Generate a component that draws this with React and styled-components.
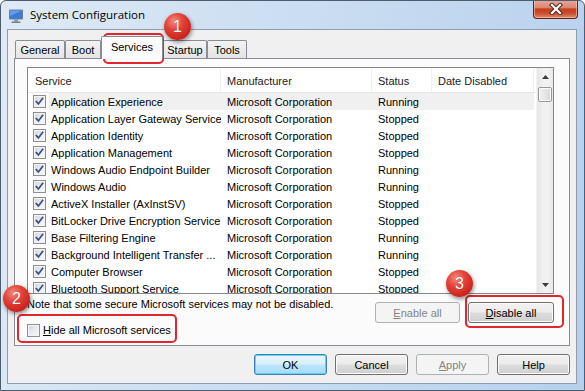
import React from 'react';
import styled, { createGlobalStyle, css } from 'styled-components';

const Global = createGlobalStyle`
  html, body { margin: 0; padding: 0; background: #ffffff; }
  body { font-family: "Liberation Sans", Arial, sans-serif; font-size: 11px; color: #000; }
  * { box-sizing: border-box; }
`;

const Window = styled.div`
  position: relative;
  width: 585px;
  height: 391px;
  border: 1px solid #4d5d70;
  border-radius: 6px 6px 0 0;
  background: linear-gradient(100deg, #dfeaf6 0%, #cfe0f2 35%, #c4d9f0 65%, #b6d0ed 100%);
  display: flex;
  flex-direction: column;
  overflow: hidden;
`;

const TitleBar = styled.div`
  height: 28px;
  flex: none;
  display: flex;
  align-items: flex-start;
  padding-left: 7px;
  padding-right: 6px;
`;

const AppIcon = styled.svg`
  width: 16px;
  height: 16px;
  margin-top: 7px;
  flex: none;
`;

const Title = styled.div`
  font-family: "Open Sans", "Noto Sans", sans-serif;
  font-size: 11.5px;
  line-height: 16px;
  margin: 6px 0 0 6px;
  color: #000;
`;

const CloseButton = styled.div`
  margin-left: auto;
  width: 45px;
  height: 19px;
  margin-top: -1px;
  border: 1px solid #5e2219;
  border-top: none;
  border-radius: 0 0 4px 4px;
  background: linear-gradient(#e9a898 0%, #dc8672 42%, #c5401f 50%, #c94a2d 72%, #e08a6a 100%);
  box-shadow: inset 0 0 0 1px rgba(255, 210, 195, 0.55);
  display: flex;
  align-items: center;
  justify-content: center;
`;

const Client = styled.div`
  flex: 1;
  margin: 0 7px 6px 6px;
  border: 1px solid #8d9db0;
  background: #f0f0f0;
  padding: 6px 6px 0 6px;
  display: flex;
  flex-direction: column;
`;

const TabStrip = styled.div`
  height: 22px;
  display: flex;
  align-items: flex-end;
  padding-left: 1px;
`;

const Tab = styled.div`
  width: ${p => p.$w}px;
  height: ${p => (p.$active ? 23 : 18)}px;
  margin-bottom: ${p => (p.$active ? -1 : 0)}px;
  border: 1px solid #898c95;
  border-bottom: none;
  border-radius: 2px 2px 0 0;
  display: flex;
  align-items: center;
  justify-content: center;
  padding-bottom: ${p => (p.$active ? 2 : 0)}px;
  position: relative;
  z-index: ${p => (p.$active ? 1 : 0)};
  background: ${p => (p.$active ? '#fbfbfb' : 'linear-gradient(#f3f3f3, #e4e4e4)')};
`;

const Panel = styled.div`
  height: 288px;
  border: 1px solid #898c95;
  background: #fbfbfb;
  padding: 8px 15px 0 12px;
  display: flex;
  flex-direction: column;
`;

const ListView = styled.div`
  height: 227px;
  border: 1px solid #828790;
  background: #ffffff;
  display: flex;
  overflow: hidden;
`;

const ListContent = styled.div`
  flex: 1;
  overflow: hidden;
`;

const HeaderRow = styled.div`
  height: 25px;
  display: grid;
  grid-template-columns: 193px 151px 60px 102px;
  border-bottom: 1px solid #e5e5e5;
`;

const HeaderCell = styled.div`
  display: flex;
  align-items: center;
  padding-left: ${p => p.$pad}px;
  padding-top: 1px;
  border-right: 1px solid #efefef;
  color: #1a1a1a;
`;

const Row = styled.div`
  height: 17px;
  display: flex;
  align-items: center;
`;

const CheckCell = styled.div`
  width: 21px;
  height: 17px;
  padding-left: 5px;
  display: flex;
  align-items: center;
`;

const RowBody = styled.div`
  height: 17px;
  display: grid;
  grid-template-columns: 172px 151px 60px 102px;
  align-items: center;
  background: ${p => (p.$hot ? '#f0f0f0' : 'transparent')};
`;

const Cell = styled.div`
  padding-left: ${p => p.$pad}px;
  padding-top: 1px;
  white-space: nowrap;
  overflow: hidden;
  line-height: 16px;
`;

const Box = styled.span`
  width: 13px;
  height: 13px;
  flex: none;
  border: 1px solid #8e8f8f;
  background: linear-gradient(135deg, #d3d6da 0%, #ebedef 55%, #f8f8f8 100%);
  box-shadow: inset 0 0 0 1px #f4f4f4;
  display: inline-flex;
  align-items: center;
  justify-content: center;
`;

const ScrollBar = styled.div`
  width: 17px;
  flex: none;
  background: linear-gradient(90deg, #e6e6e6, #f1f1f1 40%, #f1f1f1 70%, #e8e8e8);
  display: flex;
  flex-direction: column;
  border-left: 1px solid #f4f4f4;
`;

const ArrowButton = styled.div`
  height: 17px;
  display: flex;
  align-items: center;
  justify-content: center;
`;

const Thumb = styled.div`
  height: 15px;
  margin: 2px 1px 0 1px;
  border: 1px solid #979797;
  border-radius: 2px;
  background: linear-gradient(90deg, #f0f0f0, #e6e6e6 50%, #d8d8d8 100%);
  box-shadow: inset 0 0 0 1px #fafafa;
`;

const Track = styled.div`
  flex: 1;
`;

const BottomArea = styled.div`
  display: flex;
  justify-content: space-between;
  margin-top: 4px;
`;

const LeftCol = styled.div`
  display: flex;
  flex-direction: column;
`;

const Note = styled.div`
  line-height: 13px;
  color: #000;
`;

const CheckLabel = styled.label`
  margin-top: 13px;
  display: flex;
  align-items: center;
  gap: 3px;
  line-height: 13px;
`;

const Ul = styled.span`
  text-decoration: underline;
`;

const ButtonGroup = styled.div`
  display: flex;
  gap: 8px;
  margin-top: 4px;
`;

const Button = styled.div`
  width: ${p => p.$w}px;
  height: 21px;
  border-radius: 3px;
  display: flex;
  align-items: center;
  justify-content: center;
  border: 1px solid #707070;
  background: linear-gradient(#f2f2f2 0%, #ebebeb 48%, #dddddd 52%, #cfcfcf 100%);
  box-shadow: inset 0 0 0 1px #fbfbfb;
  color: #000;
  ${p => p.$default && css`
    border-color: #3c7fb1;
    background: linear-gradient(#eaf6fd 0%, #d9f0fc 48%, #bee6fd 52%, #a7d9f5 100%);
    box-shadow: inset 0 0 0 1px #5fd2fa;
  `}
  ${p => p.$disabled && css`
    border-color: #adb2b5;
    background: #f4f4f4;
    box-shadow: none;
    color: #838383;
  `}
`;

const DialogButtons = styled.div`
  display: flex;
  justify-content: flex-end;
  gap: 8px;
  margin-top: 8px;
`;

const Highlight = styled.div`
  position: absolute;
  left: ${p => p.$x}px;
  top: ${p => p.$y}px;
  width: ${p => p.$w}px;
  height: ${p => p.$h}px;
  border: 2px solid #e3262b;
  border-radius: 5px;
  pointer-events: none;
`;

const Marker = styled.div`
  position: absolute;
  left: ${p => p.$x}px;
  top: ${p => p.$y}px;
  width: 27px;
  height: 27px;
  border-radius: 50%;
  background: radial-gradient(circle at 38% 30%, #f58c80 0%, #e2433a 35%, #cc2520 70%, #a91510 100%);
  box-shadow: 1px 2px 4px rgba(0, 0, 0, 0.45);
  color: #ffffff;
  font-family: "Liberation Sans", Arial, sans-serif;
  font-size: 16px;
  display: flex;
  align-items: center;
  justify-content: center;
  text-shadow: 0 0 1px rgba(120, 0, 0, 0.6);
`;

const Check = () => (
  <svg width="11" height="11" viewBox="0 0 11 11">
    <path d="M2.3 5.6 L4.4 8 L8.6 2.4" fill="none" stroke="#3b5080" strokeWidth="1.7" strokeLinecap="square" />
  </svg>
);

const Arrow = ({ down }) => (
  <svg width="7" height="4" viewBox="0 0 7 4">
    <path d={down ? 'M0 0 H7 L3.5 4 Z' : 'M0 4 H7 L3.5 0 Z'} fill="#3a3a3a" />
  </svg>
);

const rows = [
  ['Application Experience', 'Running'],
  ['Application Layer Gateway Service', 'Stopped'],
  ['Application Identity', 'Stopped'],
  ['Application Management', 'Stopped'],
  ['Windows Audio Endpoint Builder', 'Running'],
  ['Windows Audio', 'Running'],
  ['ActiveX Installer (AxInstSV)', 'Stopped'],
  ['BitLocker Drive Encryption Service', 'Stopped'],
  ['Base Filtering Engine', 'Running'],
  ['Background Intelligent Transfer ...', 'Running'],
  ['Computer Browser', 'Stopped'],
  ['Bluetooth Support Service', 'Stopped'],
];

const tabs = [
  { label: 'General', w: 50 },
  { label: 'Boot', w: 36 },
  { label: 'Services', w: 62, active: true },
  { label: 'Startup', w: 44 },
  { label: 'Tools', w: 40 },
];

export default function App() {
  return (
    <>
      <Global />
      <Window>
        <TitleBar>
          <AppIcon viewBox="0 0 16 16">
            <rect x="1" y="1.5" width="14" height="10" rx="1" fill="#6f7f93" />
            <rect x="2" y="2.5" width="12" height="8" fill="#3d7ad6" />
            <path d="M2 2.5 H14 L2 8 Z" fill="#79aaf0" opacity="0.7" />
            <rect x="6" y="11.5" width="4" height="2" fill="#8c96a3" />
            <rect x="3.5" y="13.5" width="9" height="1.5" rx="0.5" fill="#6f7f93" />
          </AppIcon>
          <Title>System Configuration</Title>
          <CloseButton>
            <svg width="14" height="12" viewBox="0 0 14 12">
              <path d="M3 2 L11 10 M11 2 L3 10" stroke="#4a2a26" strokeWidth="4.2" strokeLinecap="square" />
              <path d="M3 2 L11 10 M11 2 L3 10" stroke="#ffffff" strokeWidth="2.2" strokeLinecap="square" />
            </svg>
          </CloseButton>
        </TitleBar>
        <Client>
          <TabStrip>
            {tabs.map(t => (
              <Tab key={t.label} $w={t.w} $active={t.active}>{t.label}</Tab>
            ))}
          </TabStrip>
          <Panel>
            <ListView>
              <ListContent>
                <HeaderRow>
                  <HeaderCell $pad={7}>Service</HeaderCell>
                  <HeaderCell $pad={6}>Manufacturer</HeaderCell>
                  <HeaderCell $pad={6}>Status</HeaderCell>
                  <HeaderCell $pad={6}>Date Disabled</HeaderCell>
                </HeaderRow>
                {rows.map(([name, status], i) => (
                  <Row key={name}>
                    <CheckCell><Box><Check /></Box></CheckCell>
                    <RowBody $hot={i === 0}>
                      <Cell $pad={2}>{name}</Cell>
                      <Cell $pad={6}>Microsoft Corporation</Cell>
                      <Cell $pad={6}>{status}</Cell>
                      <Cell $pad={6}></Cell>
                    </RowBody>
                  </Row>
                ))}
              </ListContent>
              <ScrollBar>
                <ArrowButton><Arrow /></ArrowButton>
                <Thumb />
                <Track />
                <ArrowButton><Arrow down /></ArrowButton>
              </ScrollBar>
            </ListView>
            <BottomArea>
              <LeftCol>
                <Note>Note that some secure Microsoft services may not be disabled.</Note>
                <CheckLabel>
                  <Box />
                  <span><Ul>H</Ul>ide all Microsoft services</span>
                </CheckLabel>
              </LeftCol>
              <ButtonGroup>
                <Button $w={85} $disabled><span><Ul>E</Ul>nable all</span></Button>
                <Button $w={86}><span><Ul>D</Ul>isable all</span></Button>
              </ButtonGroup>
            </BottomArea>
          </Panel>
          <DialogButtons>
            <Button $w={73} $default>OK</Button>
            <Button $w={73}>Cancel</Button>
            <Button $w={73} $disabled><span><Ul>A</Ul>pply</span></Button>
            <Button $w={73}>Help</Button>
          </DialogButtons>
        </Client>
        <Highlight $x={102} $y={32} $w={61} $h={31} />
        <Marker $x={163} $y={12}>1</Marker>
        <Highlight $x={16} $y={313} $w={160} $h={29} />
        <Marker $x={2} $y={284}>2</Marker>
        <Highlight $x={464} $y={294} $w={99} $h={33} />
        <Marker $x={445} $y={269}>3</Marker>
      </Window>
    </>
  );
}
